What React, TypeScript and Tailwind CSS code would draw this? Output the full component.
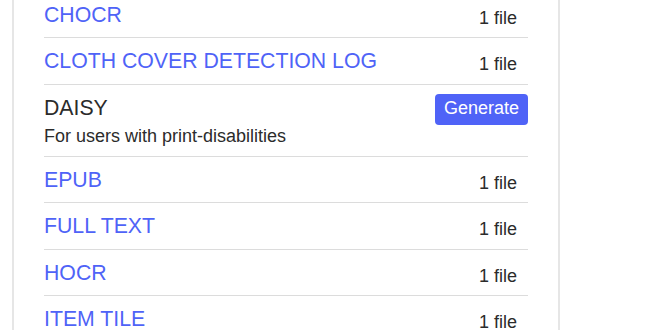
interface FormatRow {
  name: string
  files?: string
  description?: string
  generate?: boolean
}

const formats: FormatRow[] = [
  { name: "CHOCR", files: "1 file" },
  { name: "CLOTH COVER DETECTION LOG", files: "1 file" },
  { name: "DAISY", description: "For users with print-disabilities", generate: true },
  { name: "EPUB", files: "1 file" },
  { name: "FULL TEXT", files: "1 file" },
  { name: "HOCR", files: "1 file" },
  { name: "ITEM TILE", files: "1 file" },
  { name: "JPEG THUMB", files: "1 file" },
]

function Row({ row }: { row: FormatRow }) {
  return (
    <div className="flex justify-between items-start border-b border-[#dcdcdc] pt-[11px] pb-[10.33px]">
      <div className="flex flex-col">
        {row.generate ? (
          <span className="text-[21.25px] leading-6 text-[#2b2b2b]">{row.name}</span>
        ) : (
          <a href="#" className="text-[21.25px] leading-6 text-[#4f63f7]">
            {row.name}
          </a>
        )}
        {row.description && (
          <span className="mt-[4px] mb-[-2px] text-[18px] leading-6 text-[#2b2b2b]">{row.description}</span>
        )}
      </div>
      {row.generate ? (
        <button className="-mt-[2px] rounded-[4px] bg-[#4f63f7] px-[9px] pt-[4px] pb-[6px] text-[18px] leading-[21px] text-white">
          Generate
        </button>
      ) : (
        <span className="mt-[3px] -mb-[3px] pr-[11px] text-[18px] leading-6 text-[#2b2b2b]">{row.files}</span>
      )}
    </div>
  )
}

export default function App() {
  return (
    <div className="h-[330px] w-[660px] overflow-hidden bg-white" style={{ fontFamily: '"Liberation Sans", Arial, sans-serif' }}>
      <div className="ml-[12px] w-[548px] border-x-2 border-[#e6e6e6] px-[30px]">
        <div className="-mt-[8px]">
          {formats.map((row) => (
            <Row key={row.name} row={row} />
          ))}
        </div>
      </div>
    </div>
  )
}
